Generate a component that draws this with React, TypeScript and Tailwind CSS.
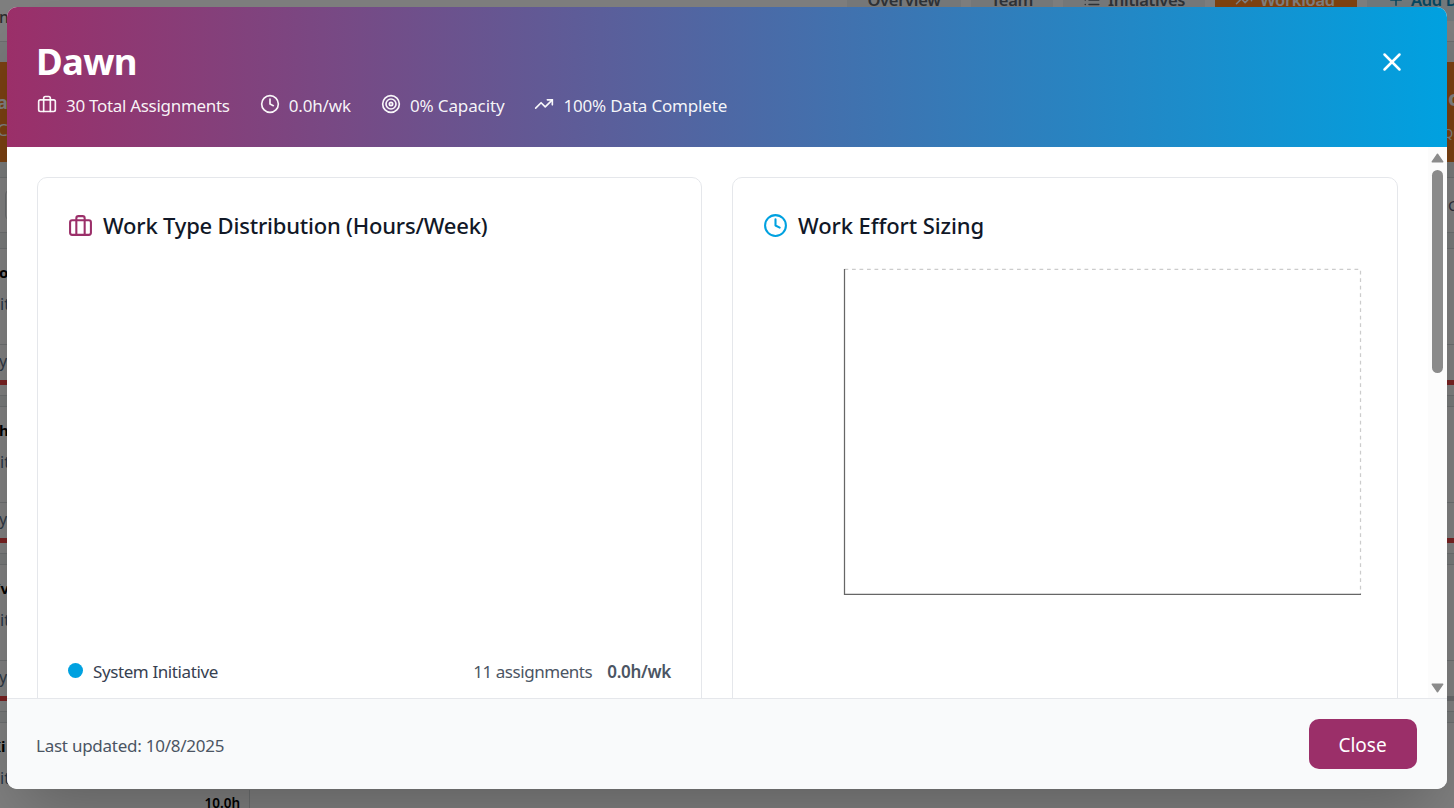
import React from "react";
import { X } from "lucide-react";

type IconProps = { className?: string };

function Icon({ className, children }: IconProps & { children: React.ReactNode }) {
  return (
    <svg
      className={className}
      viewBox="0 0 24 24"
      fill="none"
      stroke="currentColor"
      strokeWidth="2"
      strokeLinecap="round"
      strokeLinejoin="round"
    >
      {children}
    </svg>
  );
}

const Briefcase = ({ className }: IconProps) => (
  <Icon className={className}>
    <rect x="2" y="7" width="20" height="14" rx="2" ry="2" />
    <path d="M16 21V5a2 2 0 0 0-2-2h-4a2 2 0 0 0-2 2v16" />
  </Icon>
);

const Clock = ({ className }: IconProps) => (
  <Icon className={className}>
    <circle cx="12" cy="12" r="10" />
    <polyline points="12 6 12 12 16 14" />
  </Icon>
);

const Target = ({ className }: IconProps) => (
  <Icon className={className}>
    <circle cx="12" cy="12" r="10" />
    <circle cx="12" cy="12" r="6" />
    <circle cx="12" cy="12" r="2" />
  </Icon>
);

const Trending = ({ className }: IconProps) => (
  <Icon className={className}>
    <polyline points="22 7 13.5 15.5 8.5 10.5 2 17" />
    <polyline points="16 7 22 7 22 13" />
  </Icon>
);

const members = [
  { name: "o", shift: "-ml-px", over: true },
  { name: "h", shift: "-ml-px", over: true },
  { name: "Yv", shift: "-ml-[9px]", over: false },
  { name: "Ki", shift: "-ml-[9px]", over: false },
];

function MemberRow({ name, shift, over }: { name: string; shift: string; over: boolean }) {
  return (
    <div className="mb-[10px] flex h-[148px] shrink-0 flex-col border-y border-[#d8dcde] bg-white">
      <div className="flex h-[96px] flex-col border-b border-[#d8dcde] pt-[11px]">
        <span className={"h-[24px] text-[15px] font-bold leading-[24px] text-black " + shift}>{name}</span>
        <span className="mt-[8px] h-[24px] text-[16px] leading-[24px] text-[#4c6c8c]">it</span>
      </div>
      <span className="-ml-px mt-[4px] h-[24px] text-[16px] leading-[24px] text-[#5c7088]">y</span>
      <div className="mt-[7px] flex h-[5px]">
        <div className="w-[727px] bg-[#ee4444]" />
        <div className={over ? "w-[727px] bg-[#ee4444]" : "w-[727px] bg-[#d0d3d6]"} />
      </div>
    </div>
  );
}

function Page() {
  return (
    <div className="flex h-[808px] w-[1454px] flex-col overflow-hidden bg-[#f0f5f5]">
      <header className="flex h-[42px] shrink-0 items-start justify-between border-b border-[#d8dcde] bg-white">
        <span className="-ml-px mt-[5px] text-[16px] font-medium leading-[24px] text-[#5a5a5a]">n</span>
        <nav className="-mt-[21px] flex w-[607px] shrink-0 gap-[10px] text-[16.5px] font-semibold leading-[42px] tracking-[-0.3px] text-[#5c646c]">
          <div className="h-[42px] w-[114px] shrink-0 bg-[#eef2f5] text-center">Overview</div>
          <div className="h-[42px] w-[82px] shrink-0 bg-[#eef2f5] text-center">Team</div>
          <div className="flex h-[42px] w-[142px] shrink-0 items-center gap-[7px] bg-[#eef2f5] pl-[20px]">
            <Icon className="size-[18px]">
              <path d="M8 6h13M8 12h13M8 18h13M3 6h.01M3 12h.01M3 18h.01" />
            </Icon>
            <span>Initiatives</span>
          </div>
          <div className="flex h-[42px] w-[142px] shrink-0 items-center gap-[7px] bg-[#ff8420] pl-[20px] text-white">
            <Trending className="size-[18px]" />
            <span>Workload</span>
          </div>
          <div className="flex h-[42px] w-[142px] shrink-0 items-center gap-[6px] bg-[#e4f2f8] pl-[20px] text-[#0c8cc0]">
            <Icon className="size-[18px]">
              <path d="M12 5v14M5 12h14" />
            </Icon>
            <span className="whitespace-nowrap">Add Data</span>
          </div>
        </nav>
      </header>

      <section className="mt-[20px] flex h-[100px] shrink-0 justify-between bg-[#f58025] text-white">
        <div className="-ml-[3px] flex flex-col pt-[26px]">
          <span className="text-[18px] font-bold leading-[28px]">a</span>
          <span className="text-[17px] leading-[28px]">C</span>
        </div>
        <div className="flex w-[6px] flex-col pt-[20px]">
          <span className="text-[22px] font-bold leading-[30px]">o</span>
          <span className="-ml-[5px] mt-[7px] text-[13px] leading-[28px]">Qu</span>
        </div>
      </section>

      <section className="mt-[15px] flex h-[56px] shrink-0 items-center justify-between border-y border-[#d8dcde] bg-white">
        <div className="ml-[5px] h-[32px] w-[200px] rounded-[6px] border border-[#d0d4d8]" />
        <span className="w-[6px] text-[15px] text-[#5c6078]">C</span>
      </section>

      <section className="mt-[15px] flex flex-col">
        {members.map((m) => (
          <MemberRow key={m.name} name={m.name} shift={m.shift} over={m.over} />
        ))}
      </section>
    </div>
  );
}

function Stat({ icon, label, tracking }: { icon: React.ReactNode; label: string; tracking: string }) {
  return (
    <div className="flex items-center gap-[9px]">
      <span className="-mt-[4px]">{icon}</span>
      <span className={"text-[17px] leading-[26px] " + tracking}>{label}</span>
    </div>
  );
}

function Modal() {
  return (
    <div className="flex h-[782px] w-[1440px] flex-col overflow-hidden rounded-[10px] bg-white shadow-[0_31px_62px_-15px_rgba(0,0,0,0.25)]">
      <div className="flex h-[140px] shrink-0 items-start justify-between bg-[linear-gradient(to_right,#9b2f69,#00a1e0)] px-[30px] pt-[30px] text-white">
        <div>
          <h2 className="-ml-px h-[49px] text-[36.5px] font-bold leading-[49px] tracking-[-0.7px]">Dawn</h2>
          <div className="mt-[7px] flex items-center gap-[30px] text-white/95">
            <Stat icon={<Briefcase className="size-[20px]" />} label="30 Total Assignments" tracking="tracking-[-0.3px]" />
            <Stat icon={<Clock className="size-[20px]" />} label="0.0h/wk" tracking="tracking-[-0.15px]" />
            <Stat icon={<Target className="size-[20px]" />} label="0% Capacity" tracking="tracking-[-0.12px]" />
            <Stat icon={<Trending className="size-[20px]" />} label="100% Data Complete" tracking="tracking-[-0.18px]" />
          </div>
        </div>
        <button className="mr-[10px] mt-[10px]" aria-label="Close dialog">
          <X className="size-[30px]" />
        </button>
      </div>

      <div className="flex h-[551px] shrink-0 overflow-hidden">
        <div className="flex flex-1 gap-[30px] pl-[30px] pr-[30px] pt-[30px]">
          <div className="flex h-[620px] w-[665px] shrink-0 flex-col rounded-[10px] border border-[#e5e7eb] px-[30px] pt-[30px]">
            <h3 className="flex h-[34px] items-center gap-[10px] text-[22px] font-medium tracking-[-0.2px] text-[#111827]">
              <Briefcase className="size-[25px] text-[#9b2f69]" />
              Work Type Distribution (Hours/Week)
            </h3>
            <div className="h-[413px] shrink-0" />
            <div className="flex h-[30px] items-center text-[17px]">
              <span className="size-[15px] rounded-full bg-[#00a1e0]" />
              <span className="ml-[10px] mt-[4px] tracking-[-0.4px] text-[#374151]">System Initiative</span>
              <span className="ml-auto mt-[4px] tracking-[-0.45px] text-[#4b5563]">11 assignments</span>
              <span className="ml-[15px] mt-[4px] font-semibold tracking-[-0.3px] text-[#4b5563]">0.0h/wk</span>
            </div>
          </div>

          <div className="flex h-[620px] w-[666px] shrink-0 flex-col rounded-[10px] border border-[#e5e7eb] px-[30px] pt-[30px]">
            <h3 className="flex h-[34px] items-center gap-[10px] text-[22px] font-medium tracking-[-0.1px] text-[#111827]">
              <Clock className="size-[25px] text-[#00a1e0]" />
              Work Effort Sizing
            </h3>
            <svg className="mt-[21px] h-[375px] w-[604px]" viewBox="0 0 604 375" fill="none">
              <path d="M81.5 6.25H597.5V331.5" stroke="#cccccc" strokeWidth="1.25" strokeDasharray="3.75 3.75" />
              <path d="M81.5 6V331.25H598" stroke="#666666" strokeWidth="1.25" />
            </svg>
          </div>
        </div>

        <div className="-ml-[19px] flex w-[19px] shrink-0 flex-col items-center bg-[#fcfcfc] pt-[6px]">
          <svg className="h-[10px] w-[13px]" viewBox="0 0 13 10">
            <path d="M6.5 1.2L11.8 8.8H1.2Z" fill="#8b8b8b" stroke="#8b8b8b" strokeWidth="1.4" strokeLinejoin="round" />
          </svg>
          <div className="mt-[7px] h-[203px] w-[11px] rounded-full bg-[#8b8b8b]" />
          <svg className="mt-[310px] h-[10px] w-[13px]" viewBox="0 0 13 10">
            <path d="M6.5 8.8L11.8 1.2H1.2Z" fill="#8b8b8b" stroke="#8b8b8b" strokeWidth="1.4" strokeLinejoin="round" />
          </svg>
        </div>
      </div>

      <div className="flex flex-1 items-center justify-between border-t border-[#e5e7eb] bg-[#f9fafb] px-[30px]">
        <span className="-ml-px mt-[4px] text-[17px] tracking-[-0.25px] text-[#4b5563]">Last updated: 10/8/2025</span>
        <button className="h-[50px] w-[108px] rounded-[10px] bg-[#9b2f69] pr-px pt-[2px] text-[19px] text-white">Close</button>
      </div>
    </div>
  );
}

export default function App() {
  return (
    <div className="relative h-[808px] w-[1454px] overflow-hidden font-['Noto_Sans',sans-serif]">
      <Page />
      <div className="absolute left-0 top-[790px] flex h-[18px] w-[250px] justify-end border-r border-[#d8dcde] bg-white pr-[9px] text-[13.5px] font-semibold leading-[26px] text-black">
        10.0h
      </div>
      <div className="absolute inset-0 bg-black/50 p-[7px]">
        <Modal />
      </div>
    </div>
  );
}
